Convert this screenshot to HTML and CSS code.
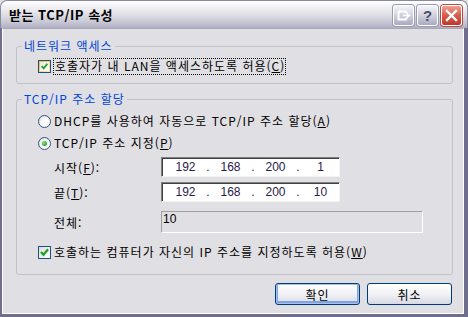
FILE: index.html
```html
<!DOCTYPE html>
<html lang="ko">
<head>
    <meta charset="UTF-8">
    <title>받는 TCP/IP 속성</title>
    <link rel="stylesheet" href="styles.css">
</head>
<body>
    <div class="window">
        <div class="titlebar">
            <span class="title">받는 TCP/IP 속성</span>
            <div class="caption-buttons">
                <span class="cap-btn">
                    <svg width="19" height="19" viewBox="0 0 19 19">
                        <path d="M4.5 5.5 H12.5 M4.5 5.5 V13.5 H12.5 M12.5 5.5 V7.5 M12.5 11.5 V13.5" fill="none" stroke="#fff" stroke-width="2"/>
                        <path d="M9 9.5 H14 M13 7.5 L15.5 9.5 L13 11.5" fill="none" stroke="#fff" stroke-width="1.6"/>
                    </svg>
                </span>
                <span class="cap-btn help">?</span>
                <span class="cap-btn close">
                    <svg width="19" height="19" viewBox="0 0 19 19">
                        <path d="M5 5 L14 14 M14 5 L5 14" stroke="#fff" stroke-width="2.4" stroke-linecap="square"/>
                    </svg>
                </span>
            </div>
        </div>
        <div class="frame">
            <div class="client">
                <fieldset class="group group-access">
                    <legend>네트워크 액세스</legend>
                    <div class="check-row">
                        <span class="checkbox hot">
                            <svg width="11" height="11" viewBox="0 0 11 11"><path d="M2 5 L4.5 7.8 L9 2.2" fill="none" stroke="#21a121" stroke-width="2.2"/></svg>
                        </span>
                        <span class="focus">호출자가 내 LAN을 액세스하도록 허용(<u>C</u>)</span>
                    </div>
                </fieldset>

                <fieldset class="group group-ip">
                    <legend>TCP/IP 주소 할당</legend>
                    <div class="radio-row first"><span class="radio"></span>DHCP를 사용하여 자동으로 TCP/IP 주소 할당(<u>A</u>)</div>
                    <div class="radio-row"><span class="radio on"></span>TCP/IP 주소 지정(<u>P</u>)</div>

                    <div class="field-row row-start">
                        <span class="field-label">시작(<u>F</u>):</span>
                        <div class="ip-box">
                            <span class="seg">192</span><span class="dot">.</span>
                            <span class="seg">168</span><span class="dot">.</span>
                            <span class="seg">200</span><span class="dot">.</span>
                            <span class="seg">1</span>
                        </div>
                    </div>
                    <div class="field-row row-end">
                        <span class="field-label">끝(<u>T</u>):</span>
                        <div class="ip-box">
                            <span class="seg">192</span><span class="dot">.</span>
                            <span class="seg">168</span><span class="dot">.</span>
                            <span class="seg">200</span><span class="dot">.</span>
                            <span class="seg">10</span>
                        </div>
                    </div>
                    <div class="field-row row-total">
                        <span class="field-label">전체:</span>
                        <div class="total-box">10</div>
                    </div>

                    <div class="check-row row-allow">
                        <span class="checkbox">
                            <svg width="11" height="11" viewBox="0 0 11 11"><path d="M2 5 L4.5 7.8 L9 2.2" fill="none" stroke="#21a121" stroke-width="2.2"/></svg>
                        </span>
                        <span>호출하는 컴퓨터가 자신의 IP 주소를 지정하도록 허용(<u>W</u>)</span>
                    </div>
                </fieldset>

                <div class="buttons">
                    <button class="push default">확인</button>
                    <button class="push">취소</button>
                </div>
            </div>
        </div>
    </div>
</body>
</html>
```

FILE: styles.css
```css
body {
    margin: 0;
    background-color: #e0dfe3;
    font-family: "Noto Sans CJK KR", "Liberation Sans", sans-serif;
    font-size: 12px;
    letter-spacing: 1px;
    color: #000;
}
.window {
    width: 468px;
    height: 317px;
    display: flex;
    flex-direction: column;
}
.titlebar {
    height: 28px;
    box-sizing: border-box;
    display: flex;
    align-items: center;
    justify-content: space-between;
    padding: 0 5px 0 8px;
    border: 1px solid #8a89a3;
    border-bottom: none;
    border-radius: 7px 7px 0 0;
    background: linear-gradient(#ffffff 0%, #f3f3f6 20%, #dfdfe6 50%, #cacad6 75%, #b0afc3 100%);
}
.title {
    font-weight: bold;
    font-size: 13px;
    letter-spacing: 0.5px;
    color: #000;
}
.caption-buttons {
    display: flex;
    gap: 3px;
    margin-top: 2px;
}
.cap-btn {
    width: 19px;
    height: 19px;
    border: 1px solid #fff;
    border-radius: 3px;
    background: linear-gradient(#f4f4f8, #c9c9d8 60%, #a9a9c0);
    display: flex;
    align-items: center;
    justify-content: center;
    box-shadow: 0 0 0 1px #9a9ab2;
}
.cap-btn.help {
    font-family: "Liberation Sans", sans-serif;
    font-weight: bold;
    font-size: 15px;
    letter-spacing: 0;
    color: #4d4d6a;
}
.cap-btn.close {
    background: linear-gradient(#f0a090, #d9594b 50%, #c2382b);
    box-shadow: 0 0 0 1px #b04f48;
}
.frame {
    flex: 1;
    border: solid #6f6e8c;
    border-width: 0 4px 3px 2px;
    display: flex;
}
.client {
    flex: 1;
    border: 1px solid #fff;
    border-top-color: #a9a8b9;
    padding: 10px 10px 0 13px;
}
.group {
    margin: 0;
    padding: 0 0 0 21px;
    border: 1px solid #c2c1cc;
    border-radius: 3px;
}
.group legend {
    margin-left: -16px;
    padding: 0 2px;
    line-height: 14px;
    color: #0046d5;
}
.group-access {
    padding-bottom: 10px;
}
.group-ip {
    margin-top: 8px;
    padding-bottom: 15px;
}
.check-row, .radio-row {
    display: flex;
    align-items: center;
    height: 14px;
    line-height: 14px;
}
.group-access .check-row {
    margin-top: 6px;
}
.checkbox {
    width: 11px;
    height: 11px;
    border: 1px solid #1c5180;
    background: linear-gradient(135deg, #dcdcd7, #ffffff);
    margin-right: 3px;
    display: flex;
}
.checkbox.hot {
    background: linear-gradient(135deg, #f8b636, #fee9b8);
}
.checkbox.hot svg {
    background: linear-gradient(135deg, #e8e8e2, #fff);
    width: 9px;
    height: 9px;
    margin: 1px;
}
.focus {
    outline: 1px dotted #000;
    padding: 0 0 1px 1px;
}
.radio-row.first {
    margin-top: 8px;
}
.radio-row + .radio-row {
    margin-top: 8px;
}
.radio {
    width: 11px;
    height: 11px;
    border: 1px solid #2f5785;
    border-radius: 50%;
    background: radial-gradient(circle at 65% 65%, #ffffff 30%, #d8d8d4 100%);
    margin-right: 3px;
    display: flex;
    align-items: center;
    justify-content: center;
}
.radio.on::after {
    content: "";
    width: 5px;
    height: 5px;
    border-radius: 50%;
    background: radial-gradient(circle at 40% 40%, #8ee88e, #21a121 70%);
}
.field-row {
    display: flex;
    align-items: center;
}
.field-label {
    width: 107px;
    padding-left: 16px;
}
.row-start {
    margin-top: 7px;
}
.row-end {
    margin-top: 5px;
}
.row-total {
    margin-top: 9px;
}
.ip-box {
    width: 179px;
    height: 20px;
    box-sizing: border-box;
    display: flex;
    align-items: center;
    padding-left: 5px;
    background-color: #fff;
    border: 1px solid;
    border-color: #808080 #f4f3ee #f4f3ee #808080;
    box-shadow: inset 1px 1px 0 #404040;
    font-family: "Liberation Sans", sans-serif;
    font-size: 12px;
    letter-spacing: 0;
    color: #2a1a4a;
}
.seg {
    width: 37px;
    text-align: center;
}
.dot {
    width: 8px;
    text-align: center;
}
.total-box {
    width: 262px;
    height: 22px;
    box-sizing: border-box;
    border: 1px solid;
    border-color: #a0a0a0 #fff #fff #a0a0a0;
    padding: 0 0 0 1px;
    line-height: 14px;
    font-family: "Liberation Sans", sans-serif;
    font-size: 12px;
    letter-spacing: 0;
}
.row-allow {
    margin-top: 12px;
}
.buttons {
    display: flex;
    justify-content: flex-end;
    gap: 7px;
    margin: 8px 1px 0 0;
}
.push {
    width: 85px;
    height: 22px;
    border: 1px solid #003c74;
    border-radius: 3px;
    background: linear-gradient(#ffffff, #f2f2f6 50%, #d9d9e4);
    font-family: "Noto Sans CJK KR", sans-serif;
    font-size: 12px;
    letter-spacing: 1px;
    padding: 0;
    color: #000;
}
.push.default {
    box-shadow: inset 0 0 0 1px #a8c2ee, inset 0 -1px 0 2px #7ea4e4;
}
```
